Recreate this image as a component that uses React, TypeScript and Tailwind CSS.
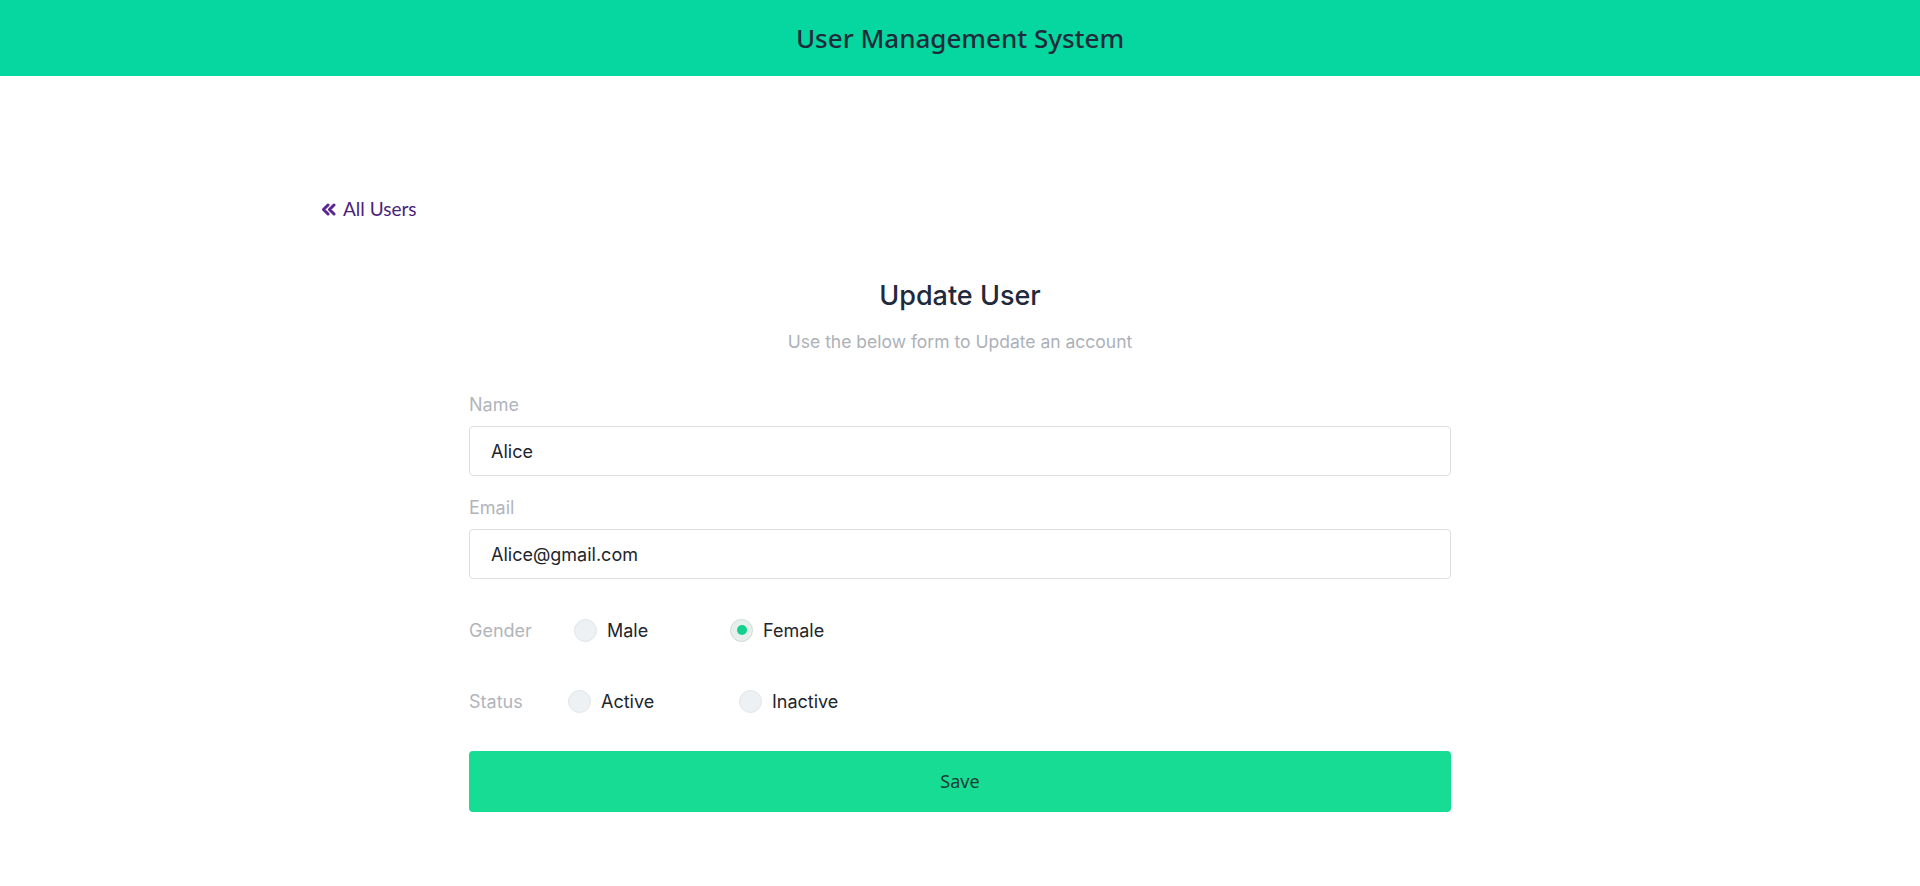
const body = { fontFamily: 'Inter, Roboto, "Liberation Sans", sans-serif' }

function Radio({ checked }: { checked?: boolean }) {
  return (
    <span
      className={
        'flex h-[23px] w-[23px] shrink-0 items-center justify-center rounded-full border ' +
        (checked ? 'border-[#cfdbd6] bg-[#e6efec]' : 'border-[#e0e6ea] bg-[#edf1f4]')
      }
    >
      {checked && <span className="h-[10px] w-[10px] rounded-full bg-[#12d18e]" />}
    </span>
  )
}

function Option({ label, checked, width }: { label: string; checked?: boolean; width: string }) {
  return (
    <label className={'flex items-center gap-[10px] ' + width}>
      <Radio checked={checked} />
      <span className="text-[18px] text-[#22252b]">{label}</span>
    </label>
  )
}

export default function App() {
  return (
    <div className="min-h-screen bg-white" style={body}>
      <header className="flex h-[76px] items-center justify-center bg-[#06d6a0]">
        <h1
          className="text-[26px] font-medium text-[#1d2b3a]"
          style={{ fontFamily: '"Noto Sans", "Open Sans", sans-serif' }}
        >
          User Management System
        </h1>
      </header>

      <main className="mx-auto w-[1280px] pb-10">
        <a
          href="#"
          className="ml-[1px] mt-[121px] flex items-center gap-[7px] text-[19px] leading-[24px] text-[#4b1f7d]"
          style={{ fontFamily: 'Lato, "Open Sans", sans-serif' }}
        >
          <svg width="15" height="13" viewBox="0 0 15 13" fill="none" className="mt-[1px]">
            <path
              d="M7 2 L2.5 6.5 L7 11 M13 2 L8.5 6.5 L13 11"
              stroke="#5a2590"
              strokeWidth="3"
              strokeLinecap="round"
              strokeLinejoin="round"
            />
          </svg>
          All Users
        </a>

        <div className="mx-auto w-[982px]">
          <h2 className="mt-[59px] text-center text-[27px] font-medium leading-[32px] text-[#1f2a3c]">
            Update User
          </h2>
          <p className="mt-[18px] text-center text-[17.5px] leading-[24px] text-[#acb1b8]">
            Use the below form to Update an account
          </p>

          <div className="mt-[39px] text-[18px] leading-[24px] text-[#b1b5bb]">Name</div>
          <div className="mt-[9px] flex h-[50px] items-center rounded-[4px] border border-[#dedede] px-[21px] text-[18px] text-[#22252b]">
            Alice
          </div>

          <div className="mt-[20px] text-[18px] leading-[24px] text-[#b1b5bb]">Email</div>
          <div className="mt-[9px] flex h-[50px] items-center rounded-[4px] border border-[#dedede] px-[21px] text-[18px] text-[#22252b]">
            Alice@gmail.com
          </div>

          <div className="mt-[39px] flex h-[24px] items-center">
            <span className="w-[105px] text-[18px] text-[#b1b5bb]">Gender</span>
            <Option label="Male" width="w-[156px]" />
            <Option label="Female" checked width="w-[156px]" />
          </div>

          <div className="mt-[47px] flex h-[24px] items-center">
            <span className="w-[99px] text-[18px] text-[#b1b5bb]">Status</span>
            <Option label="Active" width="w-[171px]" />
            <Option label="Inactive" width="w-[171px]" />
          </div>

          <button
            type="button"
            className="mt-[38px] flex h-[61px] w-full items-center justify-center rounded-[4px] bg-[#17dc93] text-[18px] text-[#1d3d33]"
            style={{ fontFamily: '"Noto Sans", "Open Sans", sans-serif' }}
          >
            Save
          </button>
        </div>
      </main>
    </div>
  )
}
